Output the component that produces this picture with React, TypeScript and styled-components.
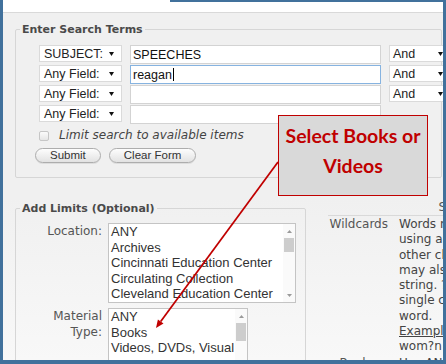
import styled, { createGlobalStyle } from 'styled-components';

const FRAME = '#41719c';
const RED = '#c00000';

const GlobalStyle = createGlobalStyle`
  html, body {
    margin: 0;
    padding: 0;
    background: #fff;
  }
`;

const Screen = styled.div`
  position: relative;
  width: 446px;
  height: 364px;
  overflow: hidden;
`;

const Page = styled.div`
  box-sizing: border-box;
  height: 100%;
  border: 3px solid ${FRAME};
  border-top: 0;
  border-bottom-width: 4px;
  overflow: hidden;
  background: linear-gradient(#f0f0f0 55%, #f8f8f8);
  font-family: 'DejaVu Sans', Verdana, sans-serif;
  color: #444;
`;

const TopEdge = styled.div`
  position: absolute;
  top: 0;
  left: 170px;
  right: 0;
  height: 2px;
  background: ${FRAME};
`;

const TopBand = styled.div`
  height: 12px;
  background: #fff;
  border-bottom: 1px solid #d9d9d9;
`;

const Fieldset = styled.fieldset`
  box-sizing: border-box;
  min-width: 0;
  margin: 0 0 0 12px;
  padding: 0;
  border: 1px solid #d6d6d6;
  border-radius: 2px;
`;

const SearchFieldset = styled(Fieldset)`
  margin: 10px 1px 0 12px;
`;

const SearchBody = styled.div`
  padding: 9px 0 14px 23px;
`;

const LimitsFieldset = styled(Fieldset)`
  flex-shrink: 0;
  width: 291px;
  margin-top: 3px;
  padding: 8px 0 20px 0;
`;

const Legend = styled.legend`
  margin-left: 4px;
  padding: 0 2px;
  font: bold 11px/13px 'DejaVu Sans', Verdana, sans-serif;
  color: #4a4a4a;
`;

const TermRows = styled.div`
  display: grid;
  grid-template-columns: 83px 251px 62px;
  grid-auto-rows: 19px;
  column-gap: 8px;
  row-gap: 1px;
`;

const Select = styled.div`
  box-sizing: border-box;
  height: 17px;
  display: flex;
  align-items: center;
  justify-content: space-between;
  padding: 0 7px 0 4px;
  background: #fff;
  border: 1px solid #dadada;
  font: 12.5px 'Liberation Sans', Arial, sans-serif;
  color: #222;
  white-space: nowrap;
`;

const AndSelect = styled(Select)`
  padding-left: 3px;
`;

const TextBox = styled.div<{ $focused?: boolean }>`
  box-sizing: border-box;
  height: 19px;
  display: flex;
  align-items: center;
  padding: 0 2px;
  background: #fff;
  border: 1px solid ${p => (p.$focused ? '#86b3e0' : '#d3d3d3')};
  font: 12.5px 'Liberation Sans', Arial, sans-serif;
  color: #111;
`;

const Caret = styled.span`
  width: 1px;
  height: 13px;
  margin-left: 1px;
  background: #000;
`;

const LimitRow = styled.div`
  display: flex;
  align-items: center;
  gap: 10px;
  margin-top: 4px;
  font: italic 12px/15px 'DejaVu Sans', Verdana, sans-serif;
  color: #444;
`;

const CheckBox = styled.span`
  box-sizing: border-box;
  width: 10px;
  height: 10px;
  border: 1px solid #c6c6c6;
  border-radius: 2px;
  background: linear-gradient(#fbfbfb, #e6e6e6);
`;

const Buttons = styled.div`
  display: flex;
  gap: 8px;
  margin: 5px 0 0 -4px;
`;

const Button = styled.button`
  box-sizing: border-box;
  height: 15px;
  padding: 0 14px;
  border: 1px solid #adadad;
  border-radius: 8px;
  background: linear-gradient(#fdfdfd, #e2e2e2);
  box-shadow: 0 1px 0 rgba(0, 0, 0, 0.08);
  font: 11.5px/13px 'Liberation Sans', Arial, sans-serif;
  color: #333;
`;

const LowerRow = styled.div`
  display: flex;
  align-items: flex-start;
  margin-top: 21px;
`;

const LimitGrid = styled.div`
  display: grid;
  grid-template-columns: 86px auto;
  column-gap: 6px;
  row-gap: 5px;
  align-items: start;
`;

const FieldLabel = styled.div`
  font: 12px/16px 'DejaVu Sans', Verdana, sans-serif;
  color: #555;
  text-align: right;
`;

const ListBox = styled.div<{ $width: number }>`
  box-sizing: border-box;
  width: ${p => p.$width}px;
  height: 80px;
  display: flex;
  background: #fff;
  border: 1px solid #c4c4c4;
`;

const Items = styled.div`
  flex: 1;
  min-width: 0;
  overflow: hidden;
  padding-left: 2px;
  font: 13px/15.6px 'Liberation Sans', Arial, sans-serif;
  color: #333;
  white-space: nowrap;
`;

const ScrollBar = styled.div`
  width: 12px;
  display: flex;
  flex-direction: column;
  align-items: center;
  background: #fafafa;
`;

const ArrowZone = styled.div`
  height: 14px;
  display: flex;
  align-items: center;
  justify-content: center;
`;

const Thumb = styled.div<{ $height: number }>`
  width: 10px;
  height: ${p => p.$height}px;
  background: #cdcdcd;
`;

const Spacer = styled.div`
  flex: 1;
`;

const Tips = styled.div`
  flex-shrink: 0;
  width: 290px;
  margin-left: 22px;
  display: grid;
  grid-template-columns: 71px 1fr;
  font: 12px/15.3px 'DejaVu Sans', Verdana, sans-serif;
  color: #444;
`;

const TipsTitle = styled.div`
  grid-column: 1 / -1;
  line-height: 16px;
  text-align: center;
  color: #555;
  border-bottom: 1px solid #d9d9d9;
`;

const TipLabel = styled.div`
  padding: 1px 11px 0 0;
  text-align: right;
  color: #555;
`;

const TipText = styled.div`
  padding-top: 1px;
  white-space: nowrap;
`;

const Underlined = styled.span`
  text-decoration: underline;
`;

const Pointer = styled.svg`
  position: absolute;
  left: 0;
  top: 0;
  pointer-events: none;
`;

const Callout = styled.div`
  position: absolute;
  left: 278px;
  top: 115px;
  box-sizing: border-box;
  width: 150px;
  height: 81px;
  padding-top: 5px;
  background: #d9d9d9;
  border: 1.5px solid ${RED};
  font: 700 19.5px/30px Lato, 'Open Sans', sans-serif;
  color: ${RED};
  text-align: center;
`;

const DropArrow = () => (
  <svg width="5" height="4" viewBox="0 0 5 4">
    <path d="M0 0h5L2.5 4z" fill="#111" />
  </svg>
);

const ScrollArrow = ({ down }: { down?: boolean }) => (
  <svg width="5" height="3" viewBox="0 0 5 3">
    <path d={down ? 'M0 0h5L2.5 3z' : 'M0 3h5L2.5 0z'} fill="#9a9a9a" />
  </svg>
);

const Scroller = ({ thumb }: { thumb: number }) => (
  <ScrollBar>
    <ArrowZone>
      <ScrollArrow />
    </ArrowZone>
    <Thumb $height={thumb} />
    <Spacer />
    <ArrowZone>
      <ScrollArrow down />
    </ArrowZone>
  </ScrollBar>
);

const terms = [
  { field: 'SUBJECT:', value: 'SPEECHES', join: true },
  { field: 'Any Field:', value: 'reagan', join: true, focused: true },
  { field: 'Any Field:', value: '', join: true },
  { field: 'Any Field:', value: '', join: false },
];

const locations = [
  'ANY',
  'Archives',
  'Cincinnati Education Center',
  'Circulating Collection',
  'Cleveland Education Center',
];

const materials = ['ANY', 'Books', 'Videos, DVDs, Visual Materials'];

export default function App() {
  return (
    <Screen>
      <GlobalStyle />
      <Page>
        <TopBand />

        <SearchFieldset>
          <Legend>Enter Search Terms</Legend>
          <SearchBody>
            <TermRows>
              {terms.map((t, i) => [
                <Select key={`f${i}`}>
                  {t.field}
                  <DropArrow />
                </Select>,
                <TextBox key={`v${i}`} $focused={t.focused}>
                  {t.value}
                  {t.focused && <Caret />}
                </TextBox>,
                t.join ? (
                  <AndSelect key={`j${i}`}>
                    And
                    <DropArrow />
                  </AndSelect>
                ) : (
                  <div key={`j${i}`} />
                ),
              ])}
            </TermRows>
            <LimitRow>
              <CheckBox />
              Limit search to available items
            </LimitRow>
            <Buttons>
              <Button>Submit</Button>
              <Button>Clear Form</Button>
            </Buttons>
          </SearchBody>
        </SearchFieldset>

        <LowerRow>
          <LimitsFieldset>
            <Legend>Add Limits (Optional)</Legend>
            <LimitGrid>
              <FieldLabel>Location:</FieldLabel>
              <ListBox $width={188}>
                <Items>
                  {locations.map(l => (
                    <div key={l}>{l}</div>
                  ))}
                </Items>
                <Scroller thumb={14} />
              </ListBox>
              <FieldLabel>
                Material
                <br />
                Type:
              </FieldLabel>
              <ListBox $width={140}>
                <Items>
                  {materials.map(m => (
                    <div key={m}>{m}</div>
                  ))}
                </Items>
                <Scroller thumb={18} />
              </ListBox>
            </LimitGrid>
          </LimitsFieldset>

          <Tips>
            <TipsTitle>Search Tips</TipsTitle>
            <TipLabel>Wildcards</TipLabel>
            <TipText>
              Words may be truncated
              <br />
              using an asterisk (*) or
              <br />
              other character. A ?
              <br />
              may also be used in a
              <br />
              string. ? replaces a
              <br />
              single character in a
              <br />
              word.
              <br />
              <Underlined>Example:</Underlined>
              <br />
              wom?n finds woman
            </TipText>
            <TipLabel>Boolean</TipLabel>
            <TipText>Use AND, OR, NOT</TipText>
          </Tips>
        </LowerRow>
      </Page>

      <TopEdge />

      <Pointer width="446" height="364" viewBox="0 0 446 364">
        <line x1="278" y1="162" x2="160.7" y2="321.5" stroke={RED} strokeWidth="1.75" />
        <polygon points="156,328 163.5,323.6 157.9,319.4" fill={RED} />
      </Pointer>

      <Callout>
        Select Books or
        <br />
        Videos
      </Callout>
    </Screen>
  );
}
